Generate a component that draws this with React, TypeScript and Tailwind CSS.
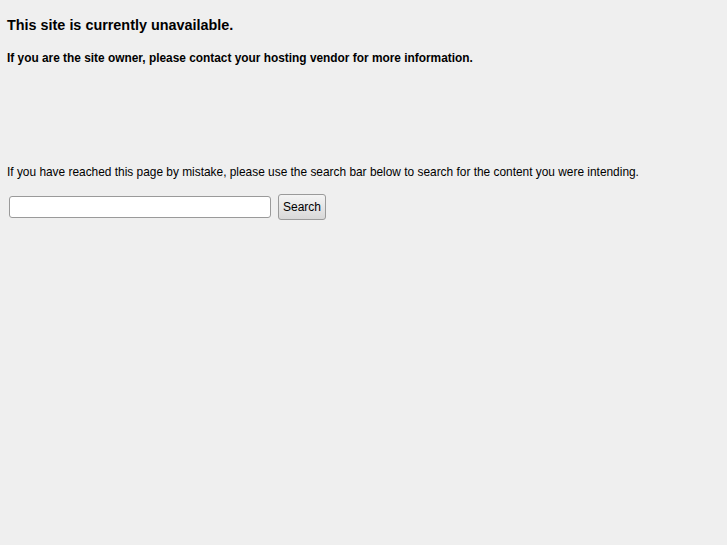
export default function App() {
  return (
    <div className="min-h-[545px] bg-[#efefef] px-[7px] pt-[15px] font-['Liberation_Sans',Arial,sans-serif] text-black">
      <h1 className="text-[14.4px] font-bold leading-[20px]">This site is currently unavailable.</h1>
      <p className="mt-[15px] text-[11.88px] font-bold leading-[16px]">
        If you are the site owner, please contact your hosting vendor for more information.
      </p>
      <p className="mt-[98px] text-[11.9px] leading-[16px]">
        If you have reached this page by mistake, please use the search bar below to search for the content you were intending.
      </p>
      <form className="mt-[14px] flex items-center gap-[7px] pl-[2px]" onSubmit={(e) => e.preventDefault()}>
        <input
          type="text"
          className="h-[22px] w-[262px] rounded-[3px] border border-[#9a9a9a] bg-white px-1 text-[12px] outline-none"
        />
        <button
          type="submit"
          className="h-[26px] w-[48px] rounded-[3px] border border-[#9a9a9a] bg-gradient-to-b from-[#f4f4f4] to-[#d8d8d8] text-[12px] text-black"
        >
          Search
        </button>
      </form>
    </div>
  );
}
